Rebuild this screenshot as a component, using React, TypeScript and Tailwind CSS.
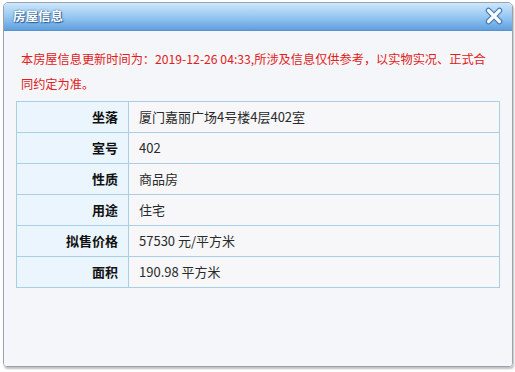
import React from "react";

const rows: [string, string][] = [
  ["坐落", "厦门嘉丽广场4号楼4层402室"],
  ["室号", "402"],
  ["性质", "商品房"],
  ["用途", "住宅"],
  ["拟售价格", "57530 元/平方米"],
  ["面积", "190.98 平方米"],
];

export default function App() {
  return (
    <div
      className="w-[515px] h-[372px] bg-white overflow-hidden pt-[2px] pl-[3px]"
      style={{ fontFamily: '"Noto Sans CJK SC", "Noto Sans", sans-serif' }}
    >
      <div className="w-[510px] h-[365px] flex flex-col border border-[#9aa3ad] rounded-t-[5px] rounded-b-[4px] overflow-hidden shadow-[1px_2px_2px_rgba(0,0,0,0.25)]">
        <div className="h-[28px] shrink-0 flex items-center justify-between pl-[9px] pr-[9px] bg-gradient-to-b from-[#cde6fb] via-[#98c8f2] to-[#5f9fdf] border-b border-[#5b92c9]">
          <span className="text-white text-[12.5px] font-bold leading-none [text-shadow:0_0_2px_#2a5f98,1px_1px_1px_#2a5f98]">
            房屋信息
          </span>
          <svg width="18" height="18" viewBox="0 0 18 18" className="mt-[-1px]">
            <path d="M3.5 3.5 L14.5 14.5 M14.5 3.5 L3.5 14.5" stroke="#3d78b8" strokeWidth="5.5" strokeLinecap="round" />
            <path d="M3.5 3.5 L14.5 14.5 M14.5 3.5 L3.5 14.5" stroke="#ffffff" strokeWidth="3.2" strokeLinecap="round" />
          </svg>
        </div>
        <div className="flex-1 bg-[#f5f6f9] pt-[16px] pl-[12px]">
          <p className="pl-[5px] pr-[24px] text-[12.2px] leading-[25px] text-[#e0201a]">
            本房屋信息更新时间为：2019-12-26 04:33,所涉及信息仅供参考，以实物实况、正式合同约定为准。
          </p>
          <table className="mt-[4px] w-[484px] border-collapse border border-[#a9cfe4] text-[13px] text-[#2a2a2a]">
            <tbody>
              {rows.map(([k, v]) => (
                <tr key={k} className="h-[31px]">
                  <td className="w-[112px] border border-[#a9cfe4] bg-[#eaf5fd] text-right pr-[10px] font-bold text-[#111] p-0">
                    {k}
                  </td>
                  <td className="border border-[#a9cfe4] bg-[#f7f7f9] pl-[10px] p-0">{v}</td>
                </tr>
              ))}
            </tbody>
          </table>
        </div>
      </div>
    </div>
  );
}
